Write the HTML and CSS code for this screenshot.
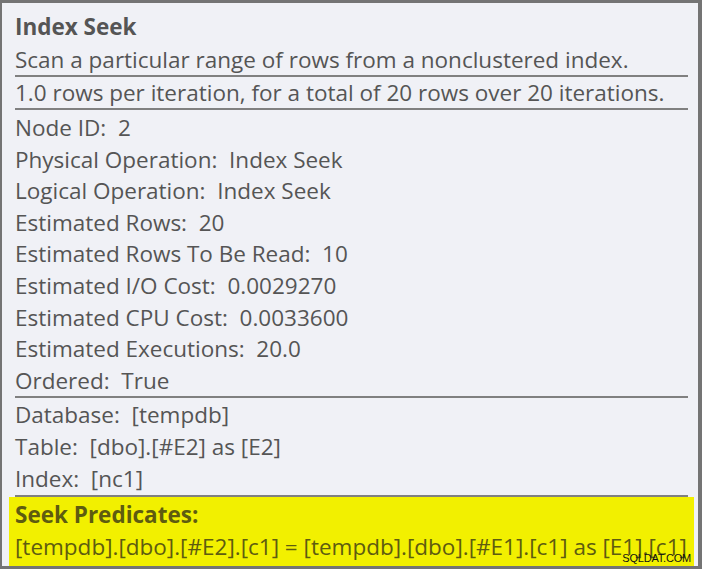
FILE: index.html
```html
<!DOCTYPE html>
<html>
<head>
<meta charset="utf-8">
<link rel="stylesheet" href="styles.css">
</head>
<body>
<div class="panel">
  <div class="title">Index Seek</div>
  <div class="line ruled first">Scan a particular range of rows from a nonclustered index.</div>
  <div class="line ruled">1.0 rows per iteration, for a total of 20 rows over 20 iterations.</div>
  <div class="group g1">
    <div class="row">Node ID:&nbsp; 2</div>
    <div class="row">Physical Operation:&nbsp; Index Seek</div>
    <div class="row">Logical Operation:&nbsp; Index Seek</div>
    <div class="row">Estimated Rows:&nbsp; 20</div>
    <div class="row">Estimated Rows To Be Read:&nbsp; 10</div>
    <div class="row">Estimated I/O Cost:&nbsp; 0.0029270</div>
    <div class="row">Estimated CPU Cost:&nbsp; 0.0033600</div>
    <div class="row">Estimated Executions:&nbsp; 20.0</div>
    <div class="row">Ordered:&nbsp; True</div>
  </div>
  <div class="group g2">
    <div class="row2">Database:&nbsp; [tempdb]</div>
    <div class="row2">Table:&nbsp; [dbo].[#E2] as [E2]</div>
    <div class="row2">Index:&nbsp; [nc1]</div>
  </div>
  <div class="highlight">
    <div class="hl-title">Seek Predicates:</div>
    <div class="hl-text">[tempdb].[dbo].[#E2].[c1] = [tempdb].[dbo].[#E1].[c1] as [E1].[c1]</div>
  </div>
  <div class="watermark">SQLDAT.COM</div>
</div>
</body>
</html>
```
FILE: styles.css
```css
html, body {
  margin: 0;
  padding: 0;
  background: #f0f1f6;
}
.panel {
  position: relative;
  box-sizing: border-box;
  width: 702px;
  height: 569px;
  border-top: 3px solid #747474;
  border-left: 2px solid #747474;
  border-right: 4px solid #747474;
  border-bottom: 3px solid #747474;
  background: #f0f1f6;
  padding: 8px 10px 0 13px;
  font-family: "Open Sans", "Noto Sans", sans-serif;
  font-size: 22.5px;
  color: #555555;
  overflow: hidden;
}
.title {
  font-weight: bold;
  line-height: 32px;
  height: 32px;
}
.line {
  line-height: 31px;
  height: 31px;
  white-space: nowrap;
}
.ruled {
  border-bottom: 2px solid #808080;
}
.first {
  margin-top: 1px;
}
.group {
  border-bottom: 2px solid #808080;
}
.g1 {
  padding-top: 2px;
}
.row {
  line-height: 31.6px;
  height: 31.6px;
  white-space: nowrap;
}
.row2 {
  line-height: 32px;
  height: 32px;
  white-space: nowrap;
}
.g2 {
  height: 96px;
  padding-top: 1px;
}
.highlight {
  margin-left: -6px;
  margin-right: -6px;
  background: #f2f000;
  color: #5e5c10;
  padding: 2px 6px 2px 6px;
  height: 65px;
}
.hl-title {
  font-weight: bold;
  line-height: 32px;
  height: 32px;
}
.hl-text {
  line-height: 32px;
  height: 32px;
  white-space: nowrap;
}
.watermark {
  position: absolute;
  right: 7px;
  bottom: 2px;
  font-family: "Liberation Sans", Arial, sans-serif;
  font-size: 11px;
  color: #111111;
  letter-spacing: -0.2px;
}
```
